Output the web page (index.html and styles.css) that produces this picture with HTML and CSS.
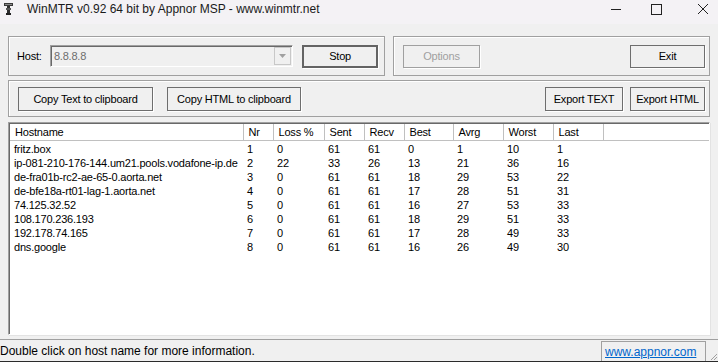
FILE: index.html
```html
<!DOCTYPE html>
<html lang="en">
<head>
    <meta charset="UTF-8">
    <title>WinMTR v0.92 64 bit by Appnor MSP - www.winmtr.net</title>
    <link rel="stylesheet" href="styles.css">
</head>
<body>

<div class="window">
    <!-- Barra de titulo -->
    <div class="titlebar">
        <svg class="app-icon" width="9" height="12" viewBox="0 0 9 12">
            <rect x="0" y="0" width="9" height="3" fill="#3a3a3a"/>
            <rect x="1" y="1" width="7" height="1" fill="#8a8a8a"/>
            <rect x="3" y="3" width="3" height="8" fill="#2e2e2e"/>
            <rect x="2" y="5" width="5" height="2" fill="#555"/>
            <rect x="2" y="10" width="5" height="2" fill="#222"/>
        </svg>
        <span class="title">WinMTR v0.92 64 bit by Appnor MSP - www.winmtr.net</span>
        <svg class="win-controls" width="132" height="18" viewBox="0 0 132 18">
            <line x1="25" y1="9.5" x2="35" y2="9.5" stroke="#222" stroke-width="1"/>
            <rect x="65.5" y="4.5" width="10" height="10" fill="none" stroke="#222" stroke-width="1"/>
            <path d="M112 4 L122 14 M122 4 L112 14" stroke="#222" stroke-width="1"/>
        </svg>
    </div>

    <div class="content">
        <div class="row">
            <div class="group group-host">
                <span class="host-label">Host:</span>
                <div class="combo">
                    <span class="combo-text">8.8.8.8</span>
                    <span class="combo-btn">
                        <svg width="7" height="4" viewBox="0 0 7 4"><path d="M0 0 H7 L3.5 4 Z" fill="#a0a0a0"/></svg>
                    </span>
                </div>
                <button type="button" class="btn btn-default btn-stop">Stop</button>
            </div>
            <div class="group group-opts">
                <button type="button" class="btn btn-disabled btn-options">Options</button>
                <button type="button" class="btn btn-exit">Exit</button>
            </div>
        </div>

        <div class="group group-export">
            <button type="button" class="btn btn-copy-text">Copy Text to clipboard</button>
            <button type="button" class="btn btn-copy-html">Copy HTML to clipboard</button>
            <span class="spacer"></span>
            <button type="button" class="btn btn-export-text">Export TEXT</button>
            <button type="button" class="btn btn-export-html">Export HTML</button>
        </div>

        <div class="listview">
            <table class="report">
                <colgroup>
                    <col class="c-host"><col class="c-nr"><col class="c-loss"><col class="c-sent"><col class="c-recv">
                    <col class="c-best"><col class="c-avrg"><col class="c-worst"><col class="c-last"><col>
                </colgroup>
                <thead>
                    <tr>
                        <th>Hostname</th><th>Nr</th><th>Loss %</th><th>Sent</th><th>Recv</th>
                        <th>Best</th><th>Avrg</th><th>Worst</th><th>Last</th><th class="filler"></th>
                    </tr>
                </thead>
                <tbody>
                    <tr><td>fritz.box</td><td>1</td><td>0</td><td>61</td><td>61</td><td>0</td><td>1</td><td>10</td><td>1</td><td></td></tr>
                    <tr><td>ip-081-210-176-144.um21.pools.vodafone-ip.de</td><td>2</td><td>22</td><td>33</td><td>26</td><td>13</td><td>21</td><td>36</td><td>16</td><td></td></tr>
                    <tr><td>de-fra01b-rc2-ae-65-0.aorta.net</td><td>3</td><td>0</td><td>61</td><td>61</td><td>18</td><td>29</td><td>53</td><td>22</td><td></td></tr>
                    <tr><td>de-bfe18a-rt01-lag-1.aorta.net</td><td>4</td><td>0</td><td>61</td><td>61</td><td>17</td><td>28</td><td>51</td><td>31</td><td></td></tr>
                    <tr><td>74.125.32.52</td><td>5</td><td>0</td><td>61</td><td>61</td><td>16</td><td>27</td><td>53</td><td>33</td><td></td></tr>
                    <tr><td>108.170.236.193</td><td>6</td><td>0</td><td>61</td><td>61</td><td>18</td><td>29</td><td>51</td><td>33</td><td></td></tr>
                    <tr><td>192.178.74.165</td><td>7</td><td>0</td><td>61</td><td>61</td><td>17</td><td>28</td><td>49</td><td>33</td><td></td></tr>
                    <tr><td>dns.google</td><td>8</td><td>0</td><td>61</td><td>61</td><td>16</td><td>26</td><td>49</td><td>30</td><td></td></tr>
                </tbody>
            </table>
        </div>
    </div>

    <!-- Barra de estado -->
    <div class="statusbar">
        <span class="status-text">Double click on host name for more information.</span>
        <span class="status-link"><a href="#">www.appnor.com</a></span>
        <svg class="grip" width="10" height="10" viewBox="0 0 10 10">
            <path d="M9 3 L3 9 M9 6 L6 9" stroke="#a0a0a0" stroke-width="1"/>
        </svg>
    </div>
</div>

</body>
</html>
```

FILE: styles.css
```css
body {
    margin: 0;
    background-color: #f0f0f0;
    font-family: "Liberation Sans", Arial, sans-serif;
    font-size: 11px;
    letter-spacing: -0.2px;
    color: #000;
}
.window {
    width: 718px;
    height: 362px;
    display: flex;
    flex-direction: column;
    overflow: hidden;
}
.titlebar {
    height: 24px;
    display: flex;
    align-items: flex-start;
    background-color: #f4f2f5;
    font-size: 12px;
    letter-spacing: 0;
    color: #1a1a1a;
}
.app-icon {
    margin: 3px 0 0 4px;
}
.title {
    margin-left: 14px;
    line-height: 18px;
}
.win-controls {
    margin-left: auto;
    display: block;
}
.content {
    flex: 1;
    padding: 12px 8px 0 8px;
    display: flex;
    flex-direction: column;
}
.row {
    display: flex;
    gap: 8px;
}
.group {
    border: 1px solid #a0a0a0;
    box-shadow: inset 1px 1px #fff;
    display: flex;
    align-items: center;
    box-sizing: border-box;
}
.group-host {
    width: 377px;
    height: 40px;
    padding: 0 6px 0 8px;
}
.group-opts {
    flex: 1;
    height: 40px;
    padding: 0 4px 0 9px;
    justify-content: space-between;
}
.group-export {
    margin-top: 4px;
    height: 37px;
    padding: 0 4px 0 9px;
}
.spacer {
    flex: 1;
}
.host-label {
    width: 33px;
}
.combo {
    width: 244px;
    height: 22px;
    box-sizing: border-box;
    border: 1px solid #a0a0a0;
    border-right-color: #fff;
    border-bottom-color: #fff;
    box-shadow: inset 1px 1px #696969;
    display: flex;
    align-items: center;
    padding: 0 1px 0 3px;
}
.combo-text {
    flex: 1;
    color: #6d6d6d;
}
.combo-btn {
    width: 17px;
    height: 18px;
    box-sizing: border-box;
    border: 1px solid #c8c8c8;
    background-color: #f0f0f0;
    display: flex;
    align-items: center;
    justify-content: center;
}
.btn {
    font-family: inherit;
    font-size: 11px;
    letter-spacing: -0.2px;
    background-color: #f0f0f0;
    color: #000;
    border: 1px solid #6e6e6e;
    box-shadow: 1px 1px #fff;
    height: 23px;
    padding: 0;
}
.btn-default {
    border: 2px solid #646464;
}
.btn-disabled {
    color: #a0a0a0;
    border-color: #a0a0a0;
}
.btn-stop {
    width: 76px;
    margin-left: 9px;
}
.btn-options {
    width: 77px;
}
.btn-exit {
    width: 75px;
}
.group-export .btn {
    height: 24px;
}
.btn-copy-text {
    width: 135px;
}
.btn-copy-html {
    width: 134px;
    margin-left: 14px;
}
.btn-export-text {
    width: 78px;
}
.btn-export-html {
    width: 75px;
    margin-left: 7px;
}
.listview {
    margin-top: 5px;
    height: 213px;
    box-sizing: border-box;
    background-color: #fff;
    border: 1px solid #a0a0a0;
    border-right-color: #fff;
    border-bottom-color: #fff;
    box-shadow: inset 1px 1px #696969, 1px 1px #e3e3e3;
    padding: 1px 0 0 1px;
    overflow: hidden;
}
.report {
    border-collapse: collapse;
    table-layout: fixed;
    width: 100%;
}
.c-host { width: 233px; }
.c-nr { width: 30px; }
.c-loss { width: 51px; }
.c-sent { width: 40px; }
.c-recv { width: 40px; }
.c-best { width: 49px; }
.c-avrg { width: 50px; }
.c-worst { width: 50px; }
.c-last { width: 50px; }
.report th {
    font-weight: normal;
    text-align: left;
    height: 16px;
    padding: 0 0 0 5px;
    border-right: 1px solid #c0c0c0;
    border-bottom: 1px solid #c0c0c0;
    white-space: nowrap;
}
.report th.filler {
    border-right: none;
}
.report td {
    height: 14px;
    padding: 0 0 0 4px;
    line-height: 14px;
    white-space: nowrap;
    overflow: hidden;
}
.report tbody tr:first-child td {
    padding-top: 1px;
}
.statusbar {
    height: 23px;
    margin-top: 3px;
    border-top: 1px solid #a0a0a0;
    border-bottom: 1px solid #2b2b2b;
    box-sizing: border-box;
    display: flex;
    align-items: stretch;
    font-size: 12px;
    letter-spacing: 0;
    position: relative;
}
.status-text {
    flex: 1;
    line-height: 20px;
    padding-top: 1px;
}
.status-link {
    width: 105px;
    margin-right: 12px;
    margin-top: 1px;
    box-sizing: border-box;
    border: 1px solid #a0a0a0;
    border-bottom: none;
    padding: 3px 0 0 3px;
}
.status-link a {
    color: #0066cc;
}
.grip {
    position: absolute;
    right: 0;
    bottom: 0;
}
```
